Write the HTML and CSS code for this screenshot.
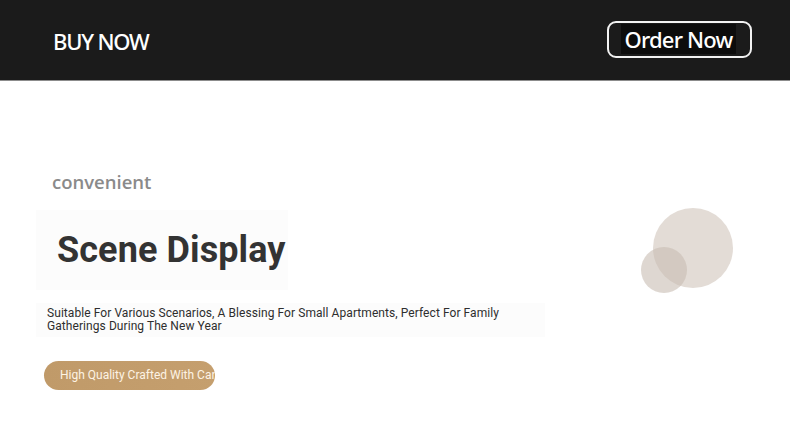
FILE: index.html
```html
<!DOCTYPE html>
<html>
<head>
    <meta charset="utf-8" />
    <title>Scene Display</title>
    <link rel="stylesheet" href="styles.css">
</head>
<body>
    <header class="top-bar">
        <div class="brand">BUY NOW</div>
        <a class="order-btn" href="#"><span>Order Now</span></a>
    </header>

    <section class="scene">
        <div class="scene-text">
            <div class="scene-tag">convenient</div>
            <div class="scene-title-box">
                <h1 class="scene-title">Scene Display</h1>
            </div>
            <p class="scene-desc">Suitable For Various Scenarios, A Blessing For Small Apartments, Perfect For Family Gatherings During The New Year</p>
            <div class="scene-pill">High Quality Crafted With Care</div>
        </div>
        <div class="scene-deco">
            <div class="circle circle-big"></div>
            <div class="circle circle-small"></div>
        </div>
    </section>
</body>
</html>
```

FILE: styles.css
```css
html, body {
    margin: 0;
    padding: 0;
    background: #ffffff;
}

body {
    font-family: "Open Sans", "Noto Sans", sans-serif;
}

/* 顶部栏 */
.top-bar {
    height: 80px;
    background: #1b1b1b;
    border-bottom: 1px solid #8c8c8c;
    display: flex;
    align-items: center;
    justify-content: space-between;
    padding: 0 38px 0 53px;
}

.brand {
    color: #ffffff;
    font-family: "Noto Sans", sans-serif;
    font-size: 22px;
    font-weight: 500;
    letter-spacing: -1.2px;
    margin-top: 1px;
}

.order-btn {
    display: flex;
    align-items: center;
    justify-content: center;
    width: 141px;
    height: 33px;
    border: 2px solid #f2f2f2;
    border-radius: 9px;
    text-decoration: none;
    margin-top: -2px;
}

.order-btn span {
    color: #ffffff;
    font-family: "Noto Sans", sans-serif;
    font-size: 22px;
    font-weight: 500;
    background: #0c0c0c;
    padding: 0 3px;
    line-height: 30px;
    letter-spacing: -0.8px;
    margin-left: -2px;
}

/* 场景区 */
.scene {
    display: flex;
    justify-content: space-between;
    padding: 88px 57px 0 36px;
}

.scene-text {
    display: flex;
    flex-direction: column;
    align-items: flex-start;
}

.scene-tag {
    color: #8a8a8a;
    font-size: 18.5px;
    font-weight: 600;
    margin-left: 16px;
    line-height: 26px;
}

.scene-title-box {
    margin-top: 15px;
    width: 252px;
    height: 80px;
    background: #fcfcfc;
    display: flex;
    align-items: center;
}

.scene-title {
    margin: 0 0 0 21px;
    font-family: Roboto, "Liberation Sans", sans-serif;
    font-weight: 700;
    font-size: 36px;
    color: #333333;
    letter-spacing: 0.1px;
}

.scene-desc {
    margin: 13px 0 0 0;
    width: 488px;
    padding: 4px 10px 4px 11px;
    background: #fcfcfc;
    font-family: Roboto, "Liberation Sans", sans-serif;
    font-size: 12px;
    line-height: 13px;
    color: #2e2e2e;
    letter-spacing: 0.07px;
}

.scene-pill {
    margin: 24px 0 0 8px;
    width: 155px;
    height: 29px;
    padding-left: 16px;
    border-radius: 15px;
    background: linear-gradient(90deg, #c09a69 0%, #c59f6e 100%);
    color: #fdf3e4;
    font-family: Roboto, "Liberation Sans", sans-serif;
    font-size: 12px;
    line-height: 29px;
    white-space: nowrap;
    overflow: hidden;
}

/* 装饰圆 */
.scene-deco {
    position: relative;
    width: 92px;
    height: 86px;
    margin-top: 39px;
}

.circle {
    position: absolute;
    border-radius: 50%;
}

.circle-big {
    width: 80px;
    height: 80px;
    right: 0;
    top: 0;
    background: #e3dcd6;
}

.circle-small {
    width: 46px;
    height: 46px;
    left: 0;
    top: 39px;
    background: rgba(200, 188, 178, 0.6);
}
```
